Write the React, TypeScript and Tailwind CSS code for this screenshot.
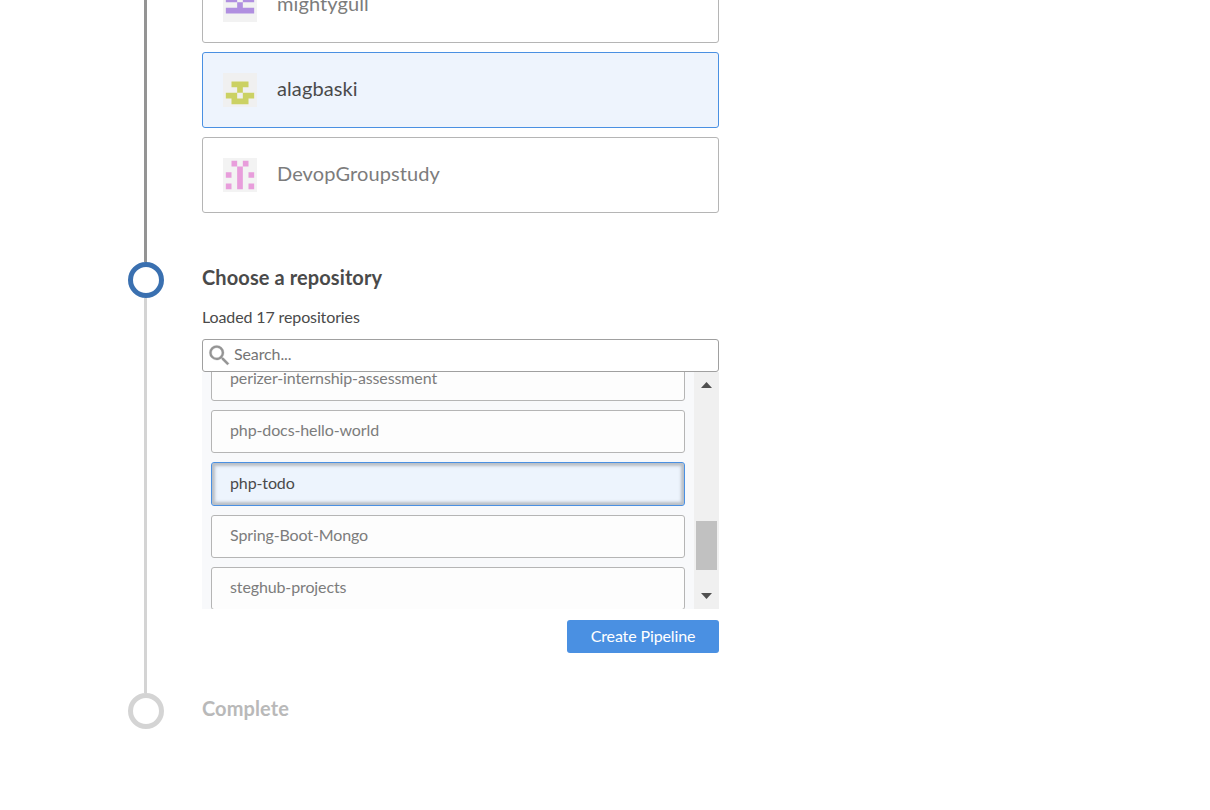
import type { ReactNode } from "react";

type Org = { name: string; color: string; bg: string; cells: string[]; selected?: boolean };

const orgs: Org[] = [
  { name: "mightygull", color: "#b08fe0", bg: "#f2f2f2", cells: ["01010", "11011", "00100", "11111", "00000"] },
  { name: "alagbaski", color: "#cbd163", bg: "#f0f0f0", cells: ["00000", "01110", "00100", "11011", "01110"], selected: true },
  { name: "DevopGroupstudy", color: "#e89ddb", bg: "#f3f3f3", cells: ["01010", "00100", "10101", "00100", "10101"] },
];

function Identicon({ org }: { org: Org }) {
  return (
    <svg className={`block size-[34px] shrink-0 ${org.name === "mightygull" ? "-mt-px" : ""}`} viewBox="0 0 12 12">
      <rect width="12" height="12" fill={org.bg} />
      <path
        fill={org.color}
        d={org.cells
          .flatMap((row, y) => row.split("").map((c, x) => (c === "1" ? `M${1 + x * 2} ${1 + y * 2}h2v2h-2z` : "")))
          .join("")}
      />
    </svg>
  );
}

function OrgCard({ org }: { org: Org }) {
  return (
    <div
      className={`flex h-[76px] shrink-0 items-center rounded-[3px] border pl-5 text-[20px] leading-6 tracking-[0.1px] ${
        org.selected ? "border-[#4a90e2] bg-[#eef4fd] text-[#4a4a4a]" : "border-[#b5b5b5] bg-white text-[#7c7c7c]"
      }`}
    >
      <Identicon org={org} />
      <span className="ml-5 pb-1">{org.name}</span>
    </div>
  );
}

function Step({ marker, line, className, children }: { marker?: string; line?: string; className: string; children: ReactNode }) {
  return (
    <section className={`flex ${className}`}>
      <div className="mr-[38px] flex w-9 shrink-0 flex-col items-center">
        {marker && <div className={`size-9 shrink-0 rounded-full border-[5px] bg-white ${marker}`} />}
        {line && <div className={`mr-px w-[3px] grow ${line}`} />}
      </div>
      <div className="flex w-[517px] flex-col">{children}</div>
    </section>
  );
}

function Repo({ name, className = "" }: { name: string; className?: string }) {
  return (
    <div className={`flex h-[43px] shrink-0 items-center rounded-[3px] border border-[#b5b5b5] bg-[#fdfdfd] pb-[3px] pl-[18px] text-[#7c7c7c] ${className}`}>
      {name}
    </div>
  );
}

export default function App() {
  return (
    <main className="h-[810px] w-full overflow-hidden bg-white pl-32 font-['Lato',sans-serif] text-[16px] leading-5 tracking-[-0.12px] text-[#4a4a4a]">
      <Step className="h-[262px]" line="bg-[#949494]">
        <div className="-mt-[33px] flex flex-col gap-[9px]">
          {orgs.map((org) => (
            <OrgCard key={org.name} org={org} />
          ))}
        </div>
      </Step>

      <Step className="h-[431px]" marker="border-[#3a70b0]" line="bg-[#d4d4d4]">
        <h2 className="mt-[3px] text-[20px] leading-6 font-bold tracking-[0.1px]">Choose a repository</h2>
        <p className="mt-[18px]">Loaded 17 repositories</p>
        <label className="mt-3 flex h-[33px] shrink-0 items-center rounded-[3px] border border-[#a0a0a0] bg-white">
          <svg className="ml-[3px] size-[27px] shrink-0" viewBox="0 0 24 24" fill="#949494" stroke="#949494" strokeWidth="0.25">
            <path d="M15.5 14h-.79l-.28-.27A6.471 6.471 0 0 0 16 9.5 6.5 6.5 0 1 0 9.5 16c1.61 0 3.09-.59 4.23-1.57l.27.28v.79l5 4.99L20.49 19l-4.99-5zm-6 0C7.01 14 5 11.99 5 9.5S7.01 5 9.5 5 14 7.01 14 9.5 11.99 14 9.5 14z" />
          </svg>
          <input className="ml-px w-full bg-transparent pb-[3px] tracking-[-0.12px] outline-none placeholder:text-[#757575]" placeholder="Search..." />
        </label>
        <div className="flex h-[237px] shrink-0 overflow-hidden bg-[#f8f9fb]">
          <div className="-mt-[14px] mr-[9px] ml-[9px] flex w-[474px] flex-col">
            <Repo name="perizer-internship-assessment" />
            <Repo name="php-docs-hello-world" className="mt-[9px]" />
            <div className="mt-[9px] flex h-11 shrink-0 items-center rounded-[3px] border border-[#4a90e2] bg-[#edf4fd] pb-[3px] pl-[18px] shadow-[inset_0_0_3px_3px_rgba(0,0,0,0.22)]">
              php-todo
            </div>
            <Repo name="Spring-Boot-Mongo" className="mt-[9px]" />
            <Repo name="steghub-projects" className="mt-[9px]" />
          </div>
          <div className="flex w-[25px] flex-col items-center bg-[#f0f0f0]">
            <svg className="mt-[10px] h-[6px] w-[11px] shrink-0" viewBox="0 0 11 6" fill="#505050">
              <path d="M0 6L5.5 0L11 6z" />
            </svg>
            <div className="mt-[133px] h-[49px] w-[21px] shrink-0 bg-[#c1c1c1]" />
            <svg className="mt-[23px] h-[6px] w-[11px] shrink-0" viewBox="0 0 11 6" fill="#505050">
              <path d="M0 0L5.5 6L11 0z" />
            </svg>
          </div>
        </div>
        <button className="mt-[11px] h-[33px] w-[152px] shrink-0 self-end rounded-[3px] bg-[#4a90e2] pb-0.5 text-white">Create Pipeline</button>
      </Step>

      <Step className="h-9" marker="border-[#d4d4d4]">
        <h2 className="mt-[3px] text-[20px] leading-6 font-bold tracking-[0.1px] text-[#b9b9b9]">Complete</h2>
      </Step>
    </main>
  );
}
